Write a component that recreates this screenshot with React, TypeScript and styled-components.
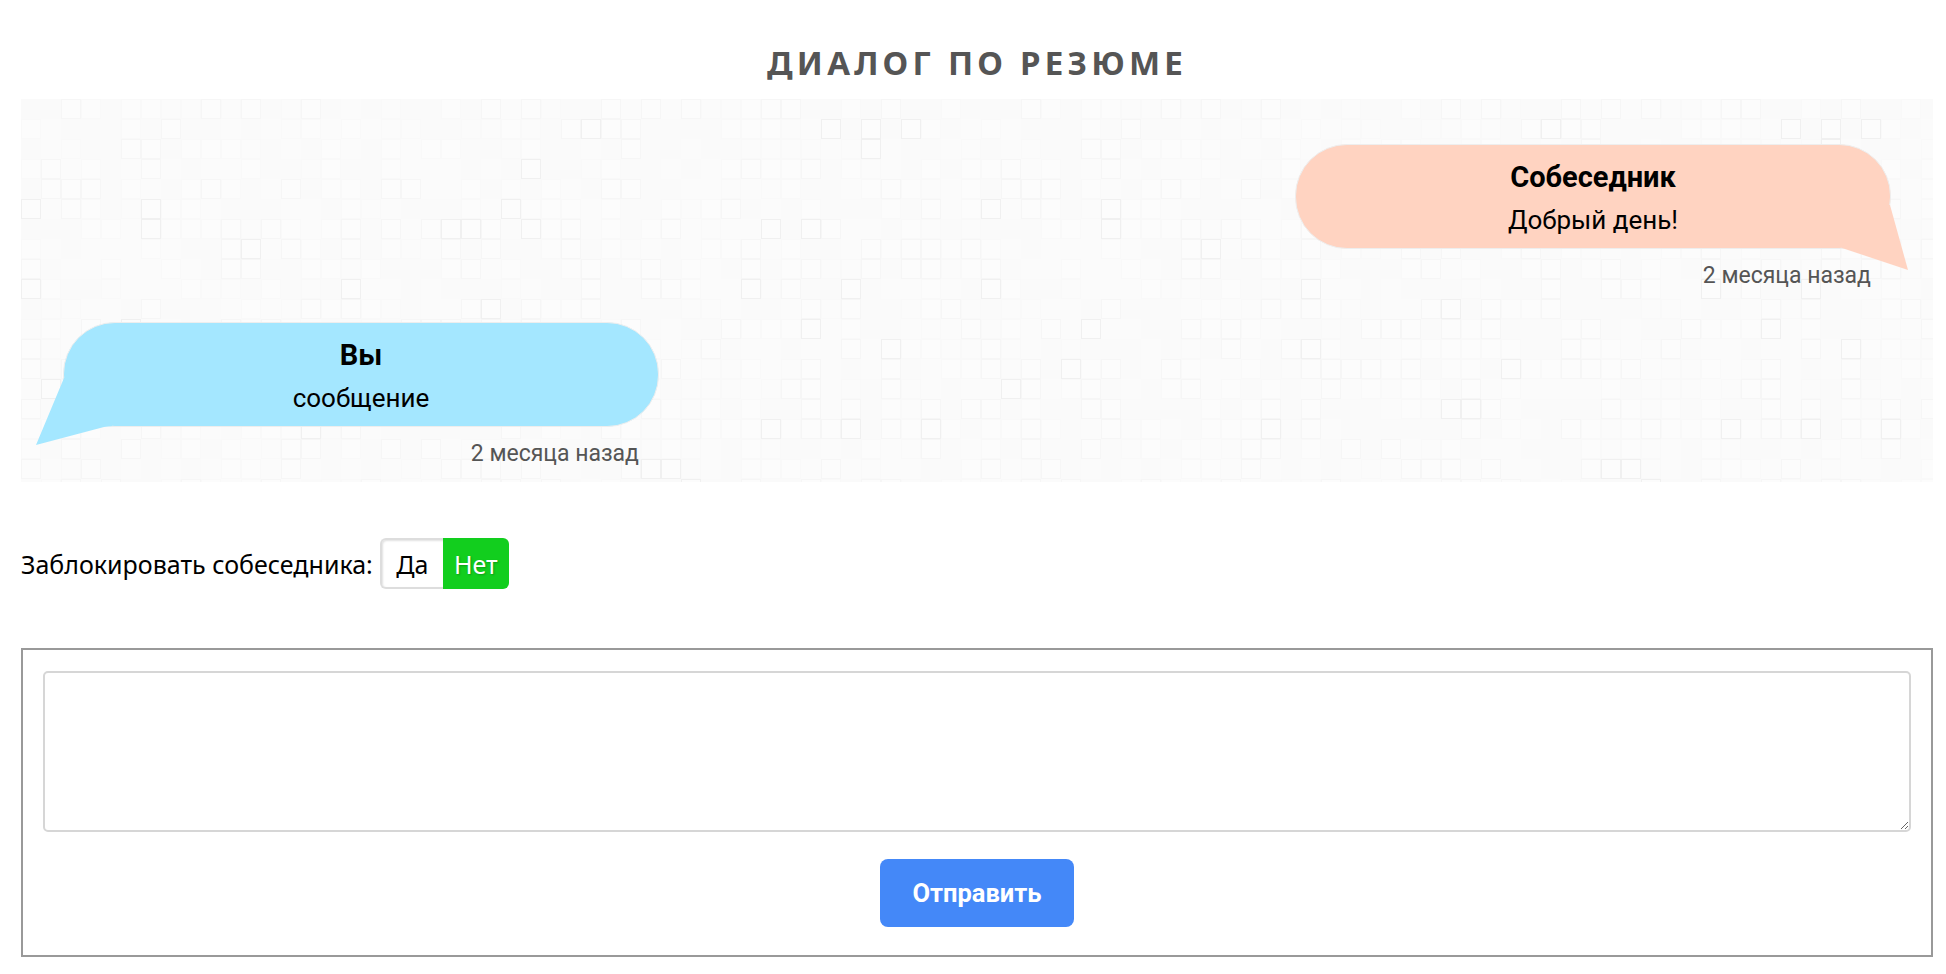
import React from 'react';
import styled, { createGlobalStyle } from 'styled-components';

// seeded so the tile background stays the same between renders
const buildTiles = () => {
  let seed = 17;
  const rnd = () => {
    seed = (seed * 16807) % 2147483647;
    return seed / 2147483647;
  };
  let rects = '';
  for (let y = 0; y < 24; y++) {
    for (let x = 0; x < 48; x++) {
      const r = rnd();
      const fill = r > 0.6 ? '#fcfcfc' : r > 0.3 ? '#fbfbfb' : '#fafafa';
      const stroke = r > 0.96 ? '#f0f0f0' : r > 0.8 ? '#f6f6f6' : r > 0.5 ? '#f9f9f9' : fill;
      rects += `<rect x='${x * 20 + 0.5}' y='${y * 20 + 0.5}' width='19' height='19' fill='${fill}' stroke='${stroke}'/>`;
    }
  }
  const svg = `<svg xmlns='http://www.w3.org/2000/svg' width='960' height='480'><filter id='b'><feGaussianBlur stdDeviation='0.6'/></filter><g filter='url(#b)'>${rects}</g></svg>`;
  return `url("data:image/svg+xml,${encodeURIComponent(svg)}")`;
};

const GlobalStyle = createGlobalStyle`
  html, body {
    margin: 0;
    padding: 0;
    background: #fff;
    color: #000;
    font-family: 'Noto Sans', 'Open Sans', sans-serif;
  }
  * {
    box-sizing: border-box;
  }
`;

const Page = styled.div`
  padding: 0 13px 0 21px;
  width: 1946px;
`;

const Title = styled.h1`
  margin: 0;
  height: 99px;
  padding-top: 43px;
  text-align: center;
  font-size: 33px;
  line-height: 40px;
  font-weight: 700;
  letter-spacing: 4.2px;
  color: #555;
`;

const Chat = styled.div<{ $tiles: string }>`
  height: 383px;
  padding: 45px 42px 0 42px;
  background-color: #fbfbfb;
  background-image: ${(p) => p.$tiles};
  display: flex;
  flex-direction: column;
  gap: 31px;
`;

const Message = styled.div<{ $mine?: boolean }>`
  width: 596px;
  align-self: ${(p) => (p.$mine ? 'flex-start' : 'flex-end')};
`;

const Bubble = styled.div<{ $mine?: boolean }>`
  position: relative;
  height: 105px;
  padding-top: 12px;
  border: 1px solid #eee;
  border-radius: 52px;
  background: ${(p) => (p.$mine ? '#a4e7ff' : '#ffd3c1')};
  text-align: center;

  &::after {
    content: '';
    position: absolute;
    background: ${(p) => (p.$mine ? '#a4e7ff' : '#ffd3c1')};
    ${(p) =>
      p.$mine
        ? `
      left: -28px;
      top: 55px;
      width: 76px;
      height: 67px;
      clip-path: polygon(28px 0, 76px 0, 76px 48px, 68px 49px, 0 67px);
    `
        : `
      right: -18px;
      top: 60px;
      width: 66px;
      height: 65px;
      clip-path: polygon(0 0, 48px 0, 66px 65px, 0 43px);
    `}
  }
`;

const Name = styled.div`
  position: relative;
  z-index: 1;
  font-size: 29px;
  line-height: 40px;
  font-weight: 700;
  font-family: 'Roboto', sans-serif;
`;

const Text = styled.div`
  position: relative;
  z-index: 1;
  margin-top: 3px;
  font-size: 26px;
  line-height: 40px;
  font-family: 'Roboto', sans-serif;
`;

const Stamp = styled.div`
  margin-top: 12px;
  padding-right: 20px;
  text-align: right;
  font-size: 23px;
  line-height: 30px;
  font-family: 'Roboto', sans-serif;
  color: #555;
`;

const BlockRow = styled.div`
  margin-top: 56px;
  height: 51px;
  display: flex;
  align-items: center;
  gap: 7px;
  font-size: 25px;
`;

const Toggle = styled.div`
  display: flex;
  height: 51px;
  width: 129px;
`;

const ToggleOption = styled.div<{ $on?: boolean }>`
  width: ${(p) => (p.$on ? '66px' : '63px')};
  display: flex;
  align-items: center;
  justify-content: center;
  font-size: 25px;
  border-radius: ${(p) => (p.$on ? '0 6px 6px 0' : '6px 0 0 6px')};
  border: ${(p) => (p.$on ? 'none' : '2px solid #ddd')};
  border-right: none;
  background: ${(p) => (p.$on ? '#12ce1e' : '#fff')};
  color: ${(p) => (p.$on ? '#fff' : '#000')};
  box-shadow: ${(p) => (p.$on ? 'none' : 'inset 1px 1px 2px rgba(0, 0, 0, 0.12)')};
  text-shadow: ${(p) => (p.$on ? '1px 1px 2px rgba(0, 0, 0, 0.25)' : 'none')};
`;

const Form = styled.form`
  margin-top: 59px;
  height: 309px;
  padding: 21px 20px 0;
  border: 2px solid #999;
  display: flex;
  flex-direction: column;
  align-items: center;
`;

const Area = styled.textarea`
  width: 100%;
  height: 161px;
  flex: none;
  border: 2px solid #d6d6d6;
  border-radius: 5px;
  outline: none;
  resize: vertical;
  background: #fff;
`;

const Send = styled.button`
  margin-top: 27px;
  width: 194px;
  height: 68px;
  border: none;
  border-radius: 8px;
  background: #4488f8;
  color: #fff;
  font-size: 25.5px;
  font-weight: 700;
  font-family: 'Roboto', sans-serif;
`;

const tiles = buildTiles();

const App: React.FC = () => (
  <>
    <GlobalStyle />
    <Page>
      <Title>ДИАЛОГ ПО РЕЗЮМЕ</Title>
      <Chat $tiles={tiles}>
        <Message>
          <Bubble>
            <Name>Собеседник</Name>
            <Text>Добрый день!</Text>
          </Bubble>
          <Stamp>2 месяца назад</Stamp>
        </Message>
        <Message $mine>
          <Bubble $mine>
            <Name>Вы</Name>
            <Text>сообщение</Text>
          </Bubble>
          <Stamp>2 месяца назад</Stamp>
        </Message>
      </Chat>
      <BlockRow>
        Заблокировать собеседника:
        <Toggle>
          <ToggleOption>Да</ToggleOption>
          <ToggleOption $on>Нет</ToggleOption>
        </Toggle>
      </BlockRow>
      <Form onSubmit={(e) => e.preventDefault()}>
        <Area />
        <Send type="submit">Отправить</Send>
      </Form>
    </Page>
  </>
);

export default App;
